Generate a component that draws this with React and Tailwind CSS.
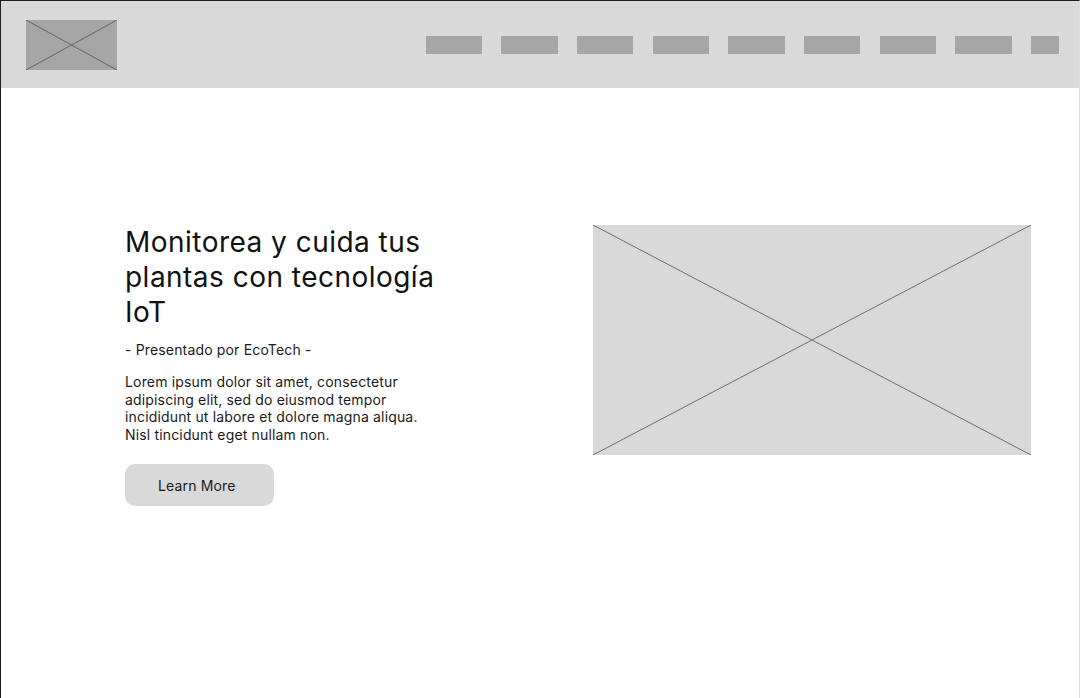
import React from "react";

function XBox({ className, stroke = "#666666" }) {
  return (
    <div className={className}>
      <svg width="100%" height="100%" viewBox="0 0 100 100" preserveAspectRatio="none" className="block">
        <line x1="0" y1="0" x2="100" y2="100" stroke={stroke} strokeWidth="1" vectorEffect="non-scaling-stroke" />
        <line x1="100" y1="0" x2="0" y2="100" stroke={stroke} strokeWidth="1" vectorEffect="non-scaling-stroke" />
      </svg>
    </div>
  );
}

export default function App() {
  const navs = [0, 1, 2, 3, 4, 5, 6, 7];
  return (
    <div
      className="w-[1080px] h-[698px] overflow-hidden bg-white border-l border-t border-r border-l-[#1e1e1e] border-t-[#1e1e1e] border-r-[#dedede] text-[#1a1a1a] tracking-[0.01em]"
      style={{ fontFamily: "Inter, 'Noto Sans', sans-serif" }}
    >
      <header className="h-[87px] bg-[#d9d9d9] flex items-center pl-[25px] pr-[20px]">
        <XBox className="w-[91px] h-[50px] bg-[#a6a6a6]" stroke="#666666" />
        <nav className="ml-auto flex items-center gap-[19.2px]">
          {navs.map((i) => (
            <div key={i} className="w-[56.5px] h-[18px] bg-[#a6a6a6]" />
          ))}
          <div className="w-[28px] h-[18px] bg-[#a6a6a6]" />
        </nav>
      </header>
      <main className="flex items-start pt-[137px] pl-[124px] pr-[48px]">
        <div className="w-[318px]">
          <h1 className="text-[28px] leading-[35px] font-normal text-[#111] tracking-[0.017em]">
            Monitorea y cuida tus plantas con tecnología IoT
          </h1>
          <p className="mt-[10px] text-[14px] leading-[20px]">- Presentado por EcoTech -</p>
          <p className="mt-[13px] text-[14px] leading-[17.6px]">
            Lorem ipsum dolor sit amet, consectetur adipiscing elit, sed do eiusmod tempor incididunt ut labore et dolore magna aliqua. Nisl tincidunt eget nullam non.
          </p>
          <button className="mt-[21px] w-[149px] h-[42px] rounded-[10px] bg-[#d9d9d9] text-[14px] text-[#1a1a1a] flex items-center justify-start pl-[33px]">
            Learn More
          </button>
        </div>
        <XBox className="ml-auto w-[438px] h-[230px] bg-[#d9d9d9]" stroke="#6e6e6e" />
      </main>
    </div>
  );
}
